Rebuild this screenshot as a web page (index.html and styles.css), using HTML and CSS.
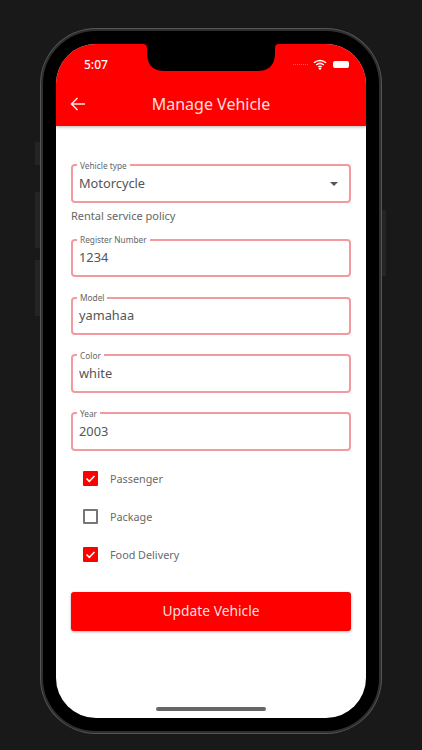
FILE: index.html
```html
<!DOCTYPE html>
<html lang="en">
<head>
<meta charset="utf-8">
<title>Manage Vehicle</title>
<link rel="stylesheet" href="styles.css">
</head>
<body>
<div class="phone">
  <span class="side side-mute"></span>
  <span class="side side-up"></span>
  <span class="side side-down"></span>
  <span class="side side-power"></span>
  <div class="screen">
    <svg class="notch" width="136" height="27" viewBox="0 0 136 27"><path d="M0 0Q4 0 4 4V9Q4 27 22 27H114Q132 27 132 9V4Q132 0 136 0Z" fill="#000"/></svg>
    <header class="header">
      <div class="status">
        <span class="time">5:07</span>
        <div class="status-icons">
          <span class="signal"></span>
          <svg class="wifi" width="14" height="11" viewBox="0 0 14 11"><path d="M1 3.800C4.500.6 9.500.6 13 3.800M3.200 6C5.500 4 8.500 4 10.800 6M5.300 8C6.300 7.200 7.700 7.200 8.700 8" fill="none" stroke="#fff" stroke-width="1.500"/><circle cx="7" cy="9.600" r="1.200" fill="#fff"/></svg>
          <span class="battery"></span>
        </div>
      </div>
      <div class="titlebar">
        <svg class="back" width="16" height="14" viewBox="0 0 16 14"><path d="M15 7H2M7.500 1 1.500 7l6 6" fill="none" stroke="#ffe6e6" stroke-width="1.500"/></svg>
        <h1 class="title">Manage Vehicle</h1>
      </div>
    </header>
    <main class="form">
      <div class="field">
        <span class="label">Vehicle type</span>
        <span class="value">Motorcycle</span>
        <span class="caret"></span>
      </div>
      <p class="policy">Rental service policy</p>
      <div class="field">
        <span class="label">Register Number</span>
        <span class="value">1234</span>
      </div>
      <div class="field field-gap">
        <span class="label">Model</span>
        <span class="value">yamahaa</span>
      </div>
      <div class="field field-gap">
        <span class="label">Color</span>
        <span class="value">white</span>
      </div>
      <div class="field field-gap">
        <span class="label">Year</span>
        <span class="value">2003</span>
      </div>
      <div class="checks">
        <div class="check">
          <span class="box box-on"><svg width="15" height="15" viewBox="0 0 15 15"><path d="M3.500 7.500 6.300 10.300 11.500 5" fill="none" stroke="#fff" stroke-width="1.600"/></svg></span>
          <span class="check-text">Passenger</span>
        </div>
        <div class="check">
          <span class="box"></span>
          <span class="check-text">Package</span>
        </div>
        <div class="check">
          <span class="box box-on"><svg width="15" height="15" viewBox="0 0 15 15"><path d="M3.500 7.500 6.300 10.300 11.500 5" fill="none" stroke="#fff" stroke-width="1.600"/></svg></span>
          <span class="check-text">Food Delivery</span>
        </div>
      </div>
      <button class="submit" type="button">Update Vehicle</button>
    </main>
    <div class="home"></div>
  </div>
</div>
</body>
</html>
```
FILE: styles.css
```css
* { box-sizing: border-box; }
html, body { margin: 0; height: 100%; }
body {
  background: #191919;
  font-family: "Noto Sans", "Open Sans", sans-serif;
  overflow: hidden;
  padding: 29px 41px 16px;
}
.phone {
  position: relative;
  width: 340px;
  height: 704px;
  padding: 13px;
  background: #000;
  border: 2px solid #2e2e2e;
  border-radius: 55px;
  box-shadow: 0 0 0 1px #555;
}
.side { position: absolute; width: 5px; background: #242424; }
.side-mute { left: -8px; top: 111px; height: 23px; }
.side-up { left: -8px; top: 161px; height: 56px; }
.side-down { left: -8px; top: 229px; height: 56px; }
.side-power { right: -7px; top: 179px; width: 4px; height: 66px; }
.screen {
  position: relative;
  display: flex;
  flex-direction: column;
  width: 310px;
  height: 674px;
  background: #fff;
  border-radius: 40px;
  overflow: hidden;
}
.notch {
  position: absolute;
  z-index: 2;
  left: 87px;
  top: 0;
}
.header {
  position: relative;
  flex: none;
  height: 82px;
  background: #fe0000;
  box-shadow: 0 1px 3px rgba(0, 0, 0, .3);
  color: #fff;
}
.status {
  display: flex;
  justify-content: space-between;
  align-items: center;
  height: 30px;
  padding: 10px 17px 0 28px;
}
.time { font-size: 12px; font-weight: 500; }
.status-icons { display: flex; align-items: center; gap: 6px; }
.signal { width: 15px; border-top: 1px dotted rgba(255, 255, 255, .35); margin-right: -1px; }
.wifi { display: block; }
.battery { width: 16px; height: 7px; background: #fff; border-radius: 2px; }
.titlebar {
  position: relative;
  display: flex;
  justify-content: center;
  align-items: center;
  height: 30px;
  margin-top: 15px;
}
.back { position: absolute; left: 14px; top: 8px; }
.title { margin: 0; font-size: 16px; font-weight: 400; color: #ffdede; }
.form {
  display: flex;
  flex-direction: column;
  padding: 38.300px 15px 0;
}
.field {
  position: relative;
  display: flex;
  align-items: center;
  height: 38.600px;
  padding: 0 6px 2px;
  border: 2px solid #f29aa0;
  border-radius: 4px;
}
.field-gap { margin-top: 19.200px; }
.label {
  position: absolute;
  left: 4px;
  top: -6.500px;
  padding: 0 3px;
  background: #fff;
  font-size: 8.300px;
  line-height: 12px;
  color: #666;
}
.value { font-size: 12.800px; color: #555; }
.caret {
  position: absolute;
  right: 11px;
  top: 16px;
  border-left: 4.500px solid transparent;
  border-right: 4.500px solid transparent;
  border-top: 4.500px solid #555;
}
.policy {
  margin: 6px 0 16px;
  font-size: 11px;
  line-height: 14px;
  color: #666;
}
.checks {
  display: flex;
  flex-direction: column;
  gap: 23px;
  margin-top: 20.600px;
  padding-left: 12px;
}
.check { display: flex; align-items: center; gap: 12px; height: 15px; }
.box {
  width: 15px;
  height: 15px;
  border: 2px solid #777;
  border-radius: 1px;
}
.box-on { border: 0; background: #fe0000; }
.box svg { display: block; }
.check-text { font-size: 10.800px; color: #6a6a6a; }
.submit {
  height: 39px;
  margin-top: 29.500px;
  padding: 0 0 2px;
  border: 0;
  border-radius: 3px;
  background: #fe0000;
  box-shadow: 0 1px 3px rgba(0, 0, 0, .3);
  color: #ffdede;
  font: 400 13.800px "Noto Sans", "Open Sans", sans-serif;
}
.home {
  position: absolute;
  left: 100px;
  bottom: 7px;
  width: 110px;
  height: 4px;
  border-radius: 2px;
  background: #666;
}
```
